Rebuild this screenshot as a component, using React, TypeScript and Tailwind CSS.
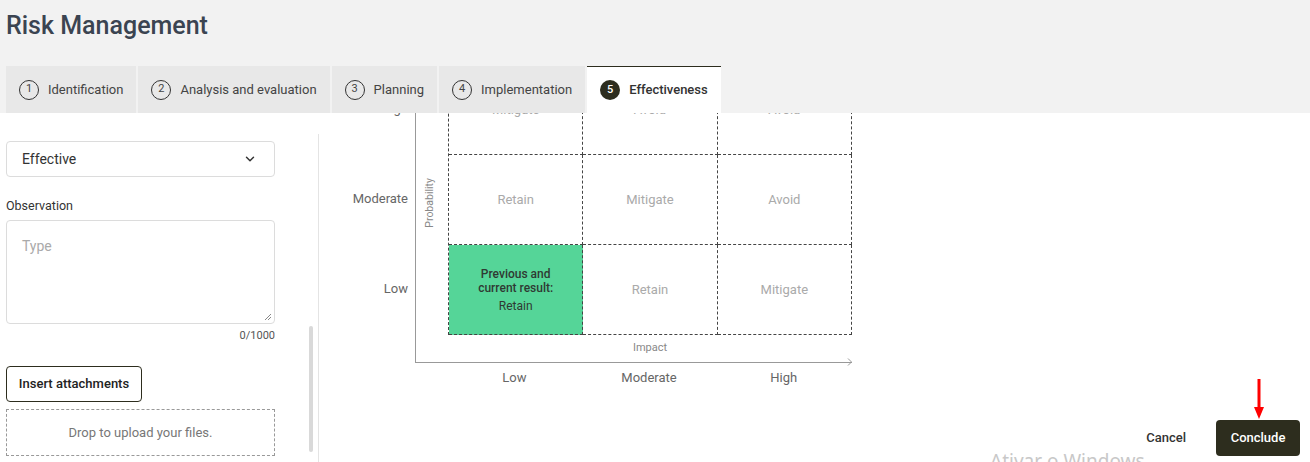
import { ChevronDown } from 'lucide-react';

const tabs = [
  { n: 1, label: 'Identification' },
  { n: 2, label: 'Analysis and evaluation' },
  { n: 3, label: 'Planning' },
  { n: 4, label: 'Implementation' },
  { n: 5, label: 'Effectiveness', active: true },
];

const rows = [
  { label: 'High', cells: ['Mitigate', 'Avoid', 'Avoid'] },
  { label: 'Moderate', cells: ['Retain', 'Mitigate', 'Avoid'] },
  { label: 'Low', cells: ['current', 'Retain', 'Mitigate'] },
];

export default function App() {
  return (
    <div className="relative h-[462px] w-[1310px] overflow-hidden bg-white font-['Roboto',sans-serif] text-[#333]">
      {/* header */}
      <header className="relative z-10 h-[113px] bg-[#f2f2f2] pl-[6px] pt-[10px]">
        <h1 className="text-[25px] leading-[31px] font-medium text-[#3b4451]">Risk Management</h1>
        <nav className="mt-[25px] flex gap-[2px]">
          {tabs.map((t) =>
            t.active ? (
              <div
                key={t.n}
                className="flex h-[47px] items-center gap-[9px] border-t border-[#2d2d1e] bg-white px-[13px] text-[13px] font-medium text-[#333]"
              >
                <span className="flex h-[20px] w-[20px] items-center justify-center rounded-full bg-[#2d2d1e] text-[11px] text-white">
                  {t.n}
                </span>
                {t.label}
              </div>
            ) : (
              <div
                key={t.n}
                className="flex h-[47px] items-center gap-[9px] bg-[#e8e8e8] px-[13px] text-[13px] text-[#444]"
              >
                <span className="flex h-[20px] w-[20px] items-center justify-center rounded-full border border-[#333] text-[11px] text-[#444]">
                  {t.n}
                </span>
                {t.label}
              </div>
            )
          )}
        </nav>
      </header>

      {/* body */}
      <div className="flex h-[349px]">
        {/* left form */}
        <div className="relative w-[319px] shrink-0 pt-[21px]">
          <div className="h-full border-r border-[#e4e4e4] pl-[6px] pt-[7px]">
            <div className="w-[269px]">
              <div className="flex h-[36px] items-center justify-between rounded-[4px] border border-[#dcdcdc] pl-[15px] pr-[17px] text-[14px] text-[#333]">
                Effective
                <ChevronDown className="h-[14px] w-[14px] text-[#333]" strokeWidth={2.5} />
              </div>
              <div className="mt-[21px] text-[12.5px] leading-[15px] text-[#333]">Observation</div>
              <div className="relative mt-[7px] h-[104px] rounded-[4px] border border-[#dcdcdc] px-[15px] pt-[15px] text-[14px] text-[#aaa]">
                Type
                <svg className="absolute bottom-[2px] right-[2px]" width="8" height="8" viewBox="0 0 8 8">
                  <path d="M1 7 L7 1 M4 7 L7 4" stroke="#888" strokeWidth="1" />
                </svg>
              </div>
              <div className="mt-[5px] text-right text-[11px] leading-[14px] text-[#555]">0/1000</div>
              <button className="mt-[23px] flex h-[36px] w-[136px] items-center justify-center rounded-[4px] border border-[#2d2d1e] text-[13px] font-medium text-[#222]">
                Insert attachments
              </button>
              <div className="mt-[7px] flex h-[47px] items-center justify-center border border-dashed border-[#999] text-[13px] text-[#777]">
                Drop to upload your files.
              </div>
            </div>
          </div>
          {/* scrollbar thumb */}
          <div className="absolute right-[6px] top-[213px] h-[126px] w-[4px] rounded-full bg-[#d9d9d9]" />
        </div>

        {/* matrix */}
        <div className="flex flex-1 flex-col overflow-hidden">
          <div className="-mt-[49px] flex">
            <div className="flex w-[96px] flex-col">
              {rows.map((r) => (
                <div key={r.label} className="flex h-[90px] items-center justify-end pr-[7px] text-[13px] text-[#666]">
                  {r.label}
                </div>
              ))}
            </div>
            <div>
              <div className="relative w-[437px] border-b border-l border-[#999] pl-[32px]">
                <div className="absolute left-[14px] top-[131px] -translate-x-1/2 -rotate-90 whitespace-nowrap text-[10.5px] text-[#888]">
                  Probability
                </div>
                <div className="grid w-[404px] grid-cols-3 border-l border-t border-dashed border-[#444]">
                  {rows.map((r) =>
                    r.cells.map((c, i) =>
                      c === 'current' ? (
                        <div
                          key={r.label + i}
                          className="flex h-[90px] flex-col items-center justify-center border-b border-r border-dashed border-[#444] bg-[#55d598] text-center text-[12px] leading-[14px] text-[#2f3a33]"
                        >
                          <span className="font-medium">
                            Previous and
                            <br />
                            current result:
                          </span>
                          <span className="mt-[4px]">Retain</span>
                        </div>
                      ) : (
                        <div
                          key={r.label + i}
                          className="flex h-[90px] items-center justify-center border-b border-r border-dashed border-[#444] text-[13px] text-[#aaa]"
                        >
                          {c}
                        </div>
                      )
                    )
                  )}
                </div>
                <div className="flex h-[27px] w-[404px] items-center justify-center text-[11px] text-[#888]">Impact</div>
                <svg className="absolute -bottom-[4px] -right-[1px]" width="6" height="8" viewBox="0 0 6 8">
                  <path d="M1 0.5 L4.5 4 L1 7.5" fill="none" stroke="#999" strokeWidth="1" />
                </svg>
              </div>
              <div className="ml-[32px] grid h-[29px] w-[404px] grid-cols-3 items-center text-center text-[13px] text-[#666]">
                <span>Low</span>
                <span>Moderate</span>
                <span>High</span>
              </div>
            </div>
          </div>

          <div className="mt-[28px] flex items-center justify-end gap-[14px] pr-[10px]">
            <button className="h-[36px] px-[16px] text-[13px] font-medium text-[#333]">Cancel</button>
            <button className="h-[36px] w-[84px] rounded-[4px] bg-[#2d2d1e] text-[13px] font-medium text-white">Conclude</button>
          </div>
        </div>
      </div>

      {/* annotation arrow */}
      <svg className="absolute left-[1253px] top-[379px]" width="12" height="41" viewBox="0 0 12 41">
        <path d="M6 0 V30" stroke="#ff0000" strokeWidth="3" />
        <path d="M1 28 L11 28 L6 40 Z" fill="#ff0000" />
      </svg>

      {/* OS watermark */}
      <div className="pointer-events-none absolute left-[990px] top-[447px] text-[19px] text-[#c8c8c8] font-['Noto_Sans',sans-serif]">
        Ativar o Windows
      </div>
    </div>
  );
}
